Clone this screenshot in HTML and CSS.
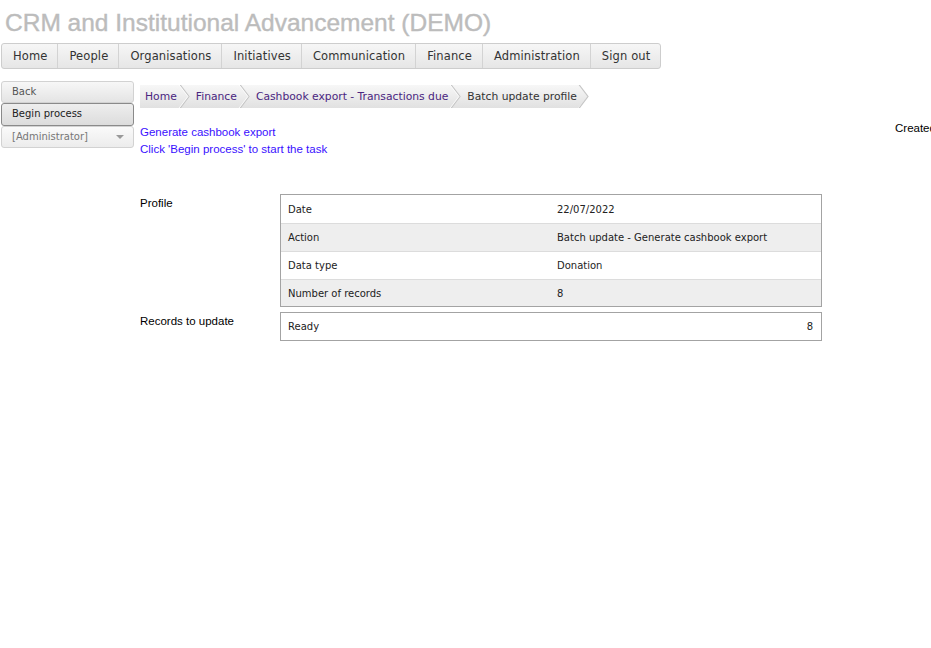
FILE: index.html
```html
<!DOCTYPE html>
<html lang="en">
<head>
<meta charset="utf-8">
<title>CRM and Institutional Advancement (DEMO)</title>
<link rel="stylesheet" href="styles.css">
</head>
<body>
<header class="site-title">CRM and Institutional Advancement (DEMO)</header>
<nav class="menu">
  <a class="menu-item" href="#">Home</a>
  <a class="menu-item" href="#">People</a>
  <a class="menu-item" href="#">Organisations</a>
  <a class="menu-item" href="#">Initiatives</a>
  <a class="menu-item" href="#">Communication</a>
  <a class="menu-item" href="#">Finance</a>
  <a class="menu-item" href="#">Administration</a>
  <a class="menu-item" href="#">Sign out</a>
</nav>
<div class="layout">
  <aside class="side">
    <a class="side-btn" href="#">Back</a>
    <a class="side-btn side-btn-active" href="#">Begin process</a>
    <div class="side-select"><span>[Administrator]</span><span class="caret"></span></div>
  </aside>
  <main class="main">
    <div class="crumbs">
      <a class="crumb" href="#">Home</a>
      <svg class="sep" width="11" height="23" viewBox="0 0 11 23"><polyline points="0.5,-1 10,11.5 0.5,24" fill="none" stroke="#c6c6c6" stroke-width="1.2"/><polyline points="-0.6,-1 8.9,11.5 -0.6,24" fill="none" stroke="#ffffff" stroke-width="0.8"/></svg>
      <a class="crumb" href="#">Finance</a>
      <svg class="sep" width="11" height="23" viewBox="0 0 11 23"><polyline points="0.5,-1 10,11.5 0.5,24" fill="none" stroke="#c6c6c6" stroke-width="1.2"/><polyline points="-0.6,-1 8.9,11.5 -0.6,24" fill="none" stroke="#ffffff" stroke-width="0.8"/></svg>
      <a class="crumb" href="#">Cashbook export - Transactions due</a>
      <svg class="sep" width="11" height="23" viewBox="0 0 11 23"><polyline points="0.5,-1 10,11.5 0.5,24" fill="none" stroke="#c6c6c6" stroke-width="1.2"/><polyline points="-0.6,-1 8.9,11.5 -0.6,24" fill="none" stroke="#ffffff" stroke-width="0.8"/></svg>
      <span class="crumb crumb-last">Batch update profile</span>
      <svg class="tip" width="12" height="23" viewBox="0 0 12 23">
        <defs><linearGradient id="tipg" x1="0" y1="0" x2="0" y2="1"><stop offset="0" stop-color="#f7f7f7"/><stop offset="1" stop-color="#e1e1e1"/></linearGradient></defs>
        <polygon points="0,0 10,11.5 0,23" fill="url(#tipg)"/>
        <polyline points="0.5,-1 10,11.5 0.5,24" fill="none" stroke="#c6c6c6" stroke-width="1.2"/>
      </svg>
    </div>
    <div class="intro">
      <div class="intro-links">
        <a class="task-link" href="#">Generate cashbook export</a>
        <a class="task-link" href="#">Click 'Begin process' to start the task</a>
      </div>
      <div class="created">Created</div>
    </div>
    <div class="form">
      <div class="form-label">Profile</div>
      <div class="box">
        <div class="row"><span class="cell">Date</span><span class="cell">22/07/2022</span></div>
        <div class="row row-alt"><span class="cell">Action</span><span class="cell">Batch update - Generate cashbook export</span></div>
        <div class="row"><span class="cell">Data type</span><span class="cell">Donation</span></div>
        <div class="row row-alt row-end"><span class="cell">Number of records</span><span class="cell">8</span></div>
      </div>
      <div class="form-label">Records to update</div>
      <div class="box">
        <div class="row row-split"><span class="cell">Ready</span><span class="cell cell-num">8</span></div>
      </div>
    </div>
  </main>
</div>
</body>
</html>
```
FILE: styles.css
```css
html, body {
  margin: 0;
  padding: 0;
  background: #ffffff;
  overflow-x: hidden;
}
body {
  font-family: "Liberation Sans", Arial, sans-serif;
  font-size: 12px;
  color: #000;
  width: 931px;
  overflow: hidden;
}
a { text-decoration: none; }

.site-title {
  font-family: "Liberation Sans", Arial, sans-serif;
  font-size: 24.5px;
  line-height: 30px;
  color: #bcbcbc;
  padding: 8px 0 0 5px;
  height: 35px;
  white-space: nowrap;
  -webkit-text-stroke: 0.4px #bcbcbc;
}

.menu {
  display: inline-flex;
  margin-left: 1px;
  height: 24px;
  border: 1px solid #cdcdcd;
  border-radius: 3px;
  background: linear-gradient(#f6f6f6, #e6e6e6);
}
.menu-item {
  font-family: "DejaVu Sans", Verdana, sans-serif;
  font-size: 11.5px;
  letter-spacing: 0.12px;
  line-height: 25px;
  color: #333;
  padding: 0 10px 0 11px;
  border-left: 1px solid #d3d3d3;
}
.menu-item:first-child { border-left: none; }

.layout {
  display: flex;
  gap: 6px;
  margin-top: 12px;
}
.side {
  flex: none;
  width: 133px;
  margin-left: 1px;
  display: flex;
  flex-direction: column;
}
.side-btn, .side-select {
  box-sizing: border-box;
  height: 22px;
  border: 1px solid #d2d2d2;
  border-radius: 3px;
  background: linear-gradient(#f7f7f7, #e4e4e4);
  font-family: "DejaVu Sans", Verdana, sans-serif;
  font-size: 10px;
  line-height: 20px;
  color: #555;
  padding-left: 10px;
}
.side-btn-active {
  border-color: #8a8a8a;
  background: linear-gradient(#eeeeee, #dcdcdc);
  color: #222;
  height: 23px;
}
.side-select {
  display: flex;
  justify-content: space-between;
  align-items: center;
  color: #777;
  padding-right: 9px;
  background: linear-gradient(#fafafa, #ececec);
}
.caret {
  width: 0;
  height: 0;
  border-left: 4px solid transparent;
  border-right: 4px solid transparent;
  border-top: 4px solid #999;
}

.main {
  padding-top: 4px;
  flex: 1;
  min-width: 0;
}
.crumbs {
  display: flex;
  height: 23px;
  align-items: stretch;
}
.crumb {
  font-family: "DejaVu Sans", Verdana, sans-serif;
  font-size: 10.75px;
  line-height: 24px;
  color: #4a2580;
  padding: 0 2px 0 6px;
  background: linear-gradient(#f7f7f7, #e1e1e1);
  white-space: nowrap;
}
.crumb:first-child { padding-left: 5px; }
.crumb-last { color: #333; padding-right: 1px; }
.sep {
  display: block;
  background: linear-gradient(#f7f7f7, #e1e1e1);
}
.tip { display: block; }

.intro {
  display: grid;
  grid-template-columns: 755px auto;
  margin-top: 16px;
}
.intro-links {
  display: flex;
  flex-direction: column;
}
.task-link {
  color: #3a10ff;
  font-size: 11.5px;
  line-height: 17px;
}
.created {
  white-space: nowrap;
  font-size: 11.5px;
  line-height: 17px;
  margin-top: -4px;
}

.form {
  display: grid;
  grid-template-columns: 140px 542px;
  row-gap: 5px;
  margin-top: 36px;
}
.form-label {
  font-size: 11.5px;
  line-height: 14px;
  padding-top: 2px;
}
.box {
  border: 1px solid #a3a3a3;
}
.row {
  display: grid;
  grid-template-columns: 269px 271px;
  height: 27px;
  border-top: 1px solid #dcdcdc;
  background: #fff;
}
.row:first-child { border-top: none; height: 28px; }
.row.row-end { height: 26px; }
.row.row-split { grid-template-columns: 1fr auto; height: 27px; }
.row-alt { background: #eeeeee; }
.cell {
  font-family: "DejaVu Sans", Verdana, sans-serif;
  font-size: 10px;
  line-height: 29px;
  color: #222;
  padding-left: 7px;
}
.row:not(:first-child) .cell { line-height: 28px; }
.row.row-end .cell { line-height: 27px; }
.row.row-split .cell { line-height: 28px; }
.cell-num { padding-right: 8px; }
```
